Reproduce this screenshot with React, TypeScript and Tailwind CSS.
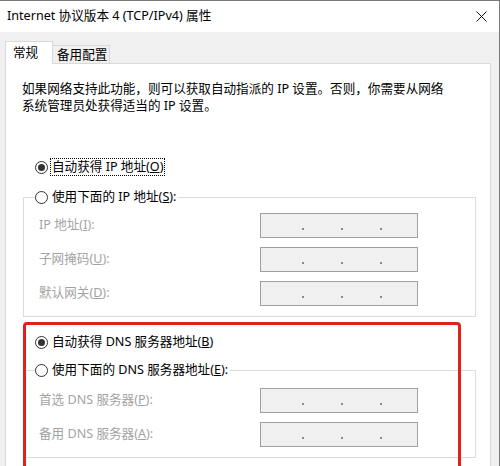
import React from "react";

function Radio({ checked }: { checked?: boolean }) {
  return (
    <span className="flex h-[13px] w-[13px] shrink-0 items-center justify-center rounded-full border border-[#333333] bg-white">
      {checked && <span className="h-[7px] w-[7px] rounded-full bg-[#333333]" />}
    </span>
  );
}

function IpBox() {
  return (
    <div className="flex h-[25px] w-[158px] items-start gap-[37px] border border-[#a0a0a0] bg-[#f0f0f0] pl-[41px] pt-[14px]">
      <div className="h-[2px] w-[2px] bg-[#8a8a8a]" />
      <div className="h-[2px] w-[2px] bg-[#8a8a8a]" />
      <div className="h-[2px] w-[2px] bg-[#8a8a8a]" />
    </div>
  );
}

function Field({ label, k, rest }: { label: string; k: string; rest: string }) {
  return (
    <div className="flex h-[25px] items-center">
      <div className="w-[236px] pl-[15px] text-[#a3a3a3]">
        {label}(<span className="underline">{k}</span>){rest}
      </div>
      <IpBox />
    </div>
  );
}

export default function App() {
  return (
    <div className="relative h-[466px] w-[500px] overflow-hidden border-t border-r border-[#7a7a7a] bg-[#f0f0f0] font-['Noto_Sans','Noto_Sans_CJK_SC',sans-serif] text-[12.6px] text-black">
      {/* title bar */}
      <div className="flex h-[31px] items-center justify-between bg-white pl-[7px] pr-[12px]">
        <span className="text-[12.6px]">Internet 协议版本 4 (TCP/IPv4) 属性</span>
        <svg width="11" height="11" viewBox="0 0 11 11">
          <path d="M0.5 0.5 L10.5 10.5 M10.5 0.5 L0.5 10.5" stroke="#111" strokeWidth="1" />
        </svg>
      </div>

      {/* tabs */}
      <div className="flex h-[31px] items-end pl-[5px]">
        <div className="relative z-10 -mb-px flex h-[23px] w-[48px] items-center border-x border-t border-[#d9d9d9] bg-white pl-[7px]">
          常规
        </div>
        <div className="-ml-px flex h-[18px] w-[58px] items-center border-x border-t border-[#d9d9d9] bg-[#f0f0f0] pl-[4px] pt-[2px]">
          备用配置
        </div>
      </div>

      {/* panel */}
      <div className="ml-[5px] h-[420px] w-[486px] border border-[#d9d9d9] bg-white">
        <p className="pl-[16px] pt-[16px] leading-[17px]">
          如果网络支持此功能，则可以获取自动指派的 IP 设置。否则，你需要从网络
          <br />
          系统管理员处获得适当的 IP 设置。
        </p>

        <div className="mt-[43px] flex h-[20px] items-center pl-[29px]">
          <Radio checked />
          <span className="ml-[2px] border border-dotted border-black px-[1px] leading-[16px]">
            自动获得 IP 地址(<span className="underline">O</span>)
          </span>
        </div>

        <fieldset className="ml-[17px] mt-[10px] w-[453px] border border-[#dcdcdc] pb-[10px]">
          <legend className="ml-[11px] flex h-[20px] items-center pr-[2px]">
            <Radio />
            <span className="ml-[4px]">
              使用下面的 IP 地址(<span className="underline">S</span>):
            </span>
          </legend>
          <div className="mt-[6px] flex flex-col gap-[9px]">
            <Field label="IP 地址" k="I" rest=":" />
            <Field label="子网掩码" k="U" rest=":" />
            <Field label="默认网关" k="D" rest=":" />
          </div>
        </fieldset>

        <div className="mt-[15px] flex h-[20px] items-center pl-[29px]">
          <Radio checked />
          <span className="ml-[4px]">
            自动获得 DNS 服务器地址(<span className="underline">B</span>)
          </span>
        </div>

        <fieldset className="ml-[17px] mt-[8px] w-[453px] border border-[#dcdcdc] pb-[10px]">
          <legend className="ml-[11px] flex h-[20px] items-center pr-[2px]">
            <Radio />
            <span className="ml-[4px]">
              使用下面的 DNS 服务器地址(<span className="underline">E</span>):
            </span>
          </legend>
          <div className="mt-[8px] flex flex-col gap-[9px]">
            <Field label="首选 DNS 服务器" k="P" rest=":" />
            <Field label="备用 DNS 服务器" k="A" rest=":" />
          </div>
        </fieldset>
      </div>

      {/* red highlight annotation */}
      <div className="absolute left-[23px] top-[321px] h-[160px] w-[438px] rounded-[4px] border-[3px] border-[#e3211c]" />
    </div>
  );
}
